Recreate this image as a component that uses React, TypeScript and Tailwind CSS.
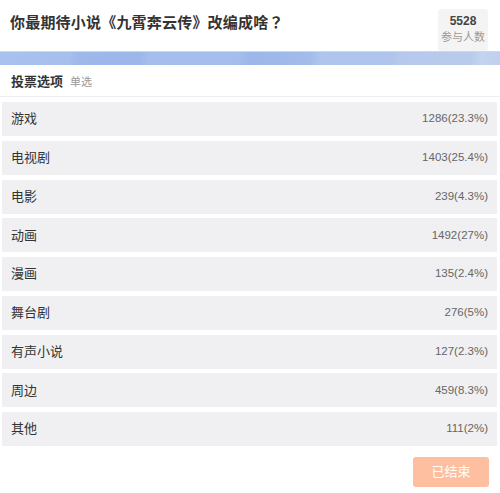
import React from 'react';

interface VoteOption {
  label: string;
  count: number;
  percent: string;
}

const options: VoteOption[] = [
  { label: '游戏', count: 1286, percent: '23.3%' },
  { label: '电视剧', count: 1403, percent: '25.4%' },
  { label: '电影', count: 239, percent: '4.3%' },
  { label: '动画', count: 1492, percent: '27%' },
  { label: '漫画', count: 135, percent: '2.4%' },
  { label: '舞台剧', count: 276, percent: '5%' },
  { label: '有声小说', count: 127, percent: '2.3%' },
  { label: '周边', count: 459, percent: '8.3%' },
  { label: '其他', count: 111, percent: '2%' },
];

const App: React.FC = () => {
  return (
    <div className="w-[500px] h-[493px] bg-white overflow-hidden font-['Liberation_Sans','Noto_Sans_CJK_SC',sans-serif] text-[#333]">
      {/* Header */}
      <div className="flex items-start justify-between pl-[10px] pr-[12px] pt-[9px] h-[51px]">
        <h1 className="text-[15px] font-bold leading-[24px] tracking-[0.2px] pt-[1px]">
          你最期待小说《九霄奔云传》改编成啥
          <span className="font-['Noto_Sans_CJK_TC',sans-serif]">？</span>
        </h1>
        <div className="w-[50px] h-[42px] bg-[#f4f4f5] rounded-[3px] flex flex-col items-center pt-[4px]">
          <span className="text-[12px] font-bold leading-[17px] text-[#444]">5528</span>
          <span className="text-[11px] leading-[15px] text-[#999]">参与人数</span>
        </div>
      </div>

      {/* Banner strip */}
      <div className="h-[14px] border-t border-[#cbd8f0] bg-[linear-gradient(100deg,#a9c1ee_0%,#a6bfed_14%,#9fb8ea_16%,#9db7ea_28%,#a6beec_30%,#a4bdec_48%,#9cb6e9_50%,#a3bceb_62%,#b0c5ec_64%,#afc4ec_78%,#b6c9ec_80%,#b9cbec_94%,#c4d3ef_96%,#bfcfed_100%)]" />

      {/* Section title */}
      <div className="flex items-baseline gap-[7px] pl-[11px] h-[32px] pt-[8px] border-b border-[#eeeeee]">
        <span className="text-[13px] font-bold leading-[18px]">投票选项</span>
        <span className="text-[11px] text-[#999] leading-[18px]">单选</span>
      </div>

      {/* Options */}
      <div className="flex flex-col gap-[4.75px] pl-[2px] pr-[3px] pt-[5px]">
        {options.map((opt) => (
          <div
            key={opt.label}
            className="h-[34px] bg-[#f0f0f2] flex items-center justify-between pl-[9px] pr-[9px]"
          >
            <span className="text-[13px] text-[#333]">{opt.label}</span>
            <span className="text-[11.5px] text-[#666]">
              {opt.count}({opt.percent})
            </span>
          </div>
        ))}
      </div>

      {/* Footer */}
      <div className="flex justify-end pr-[11px] pt-[11px]">
        <button className="w-[76px] h-[30px] rounded-[3px] bg-[#fdbf9f] text-white text-[13px]">
          已结束
        </button>
      </div>
    </div>
  );
};

export default App;
